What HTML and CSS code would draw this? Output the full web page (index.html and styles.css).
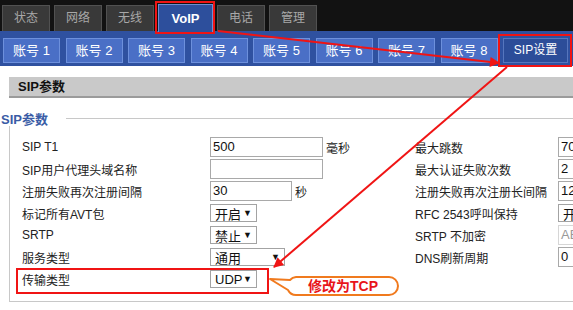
FILE: index.html
```html
<!DOCTYPE html>
<html lang="zh-CN">
<head>
    <meta charset="UTF-8">
    <meta name="viewport" content="width=device-width, initial-scale=1.0">
    <title>VoIP - SIP设置</title>
    <link rel="stylesheet" href="styles.css">
</head>
<body>
<div class="page">
    <div class="topbar">
        <div class="tab">状态</div>
        <div class="tab">网络</div>
        <div class="tab">无线</div>
        <div class="tab active">VoIP</div>
        <div class="tab">电话</div>
        <div class="tab">管理</div>
    </div>

    <div class="subbar">
        <div class="subtab">账号 1</div>
        <div class="subtab">账号 2</div>
        <div class="subtab">账号 3</div>
        <div class="subtab">账号 4</div>
        <div class="subtab">账号 5</div>
        <div class="subtab">账号 6</div>
        <div class="subtab">账号 7</div>
        <div class="subtab">账号 8</div>
        <div class="subtab active">SIP设置</div>
    </div>

    <div class="content">
        <div class="panel-head">SIP参数</div>

        <div class="legend-row">
            <span class="legend">SIP参数</span>
            <span class="legend-line"></span>
        </div>

        <div class="box">
            <div class="form-grid">
                <div class="label">SIP T1</div>
                <div class="field"><span class="input w113">500</span><span class="unit">毫秒</span></div>
                <div class="label">最大跳数</div>
                <div class="field"><span class="input w110">70</span></div>

                <div class="label">SIP用户代理头域名称</div>
                <div class="field"><span class="input w113"></span></div>
                <div class="label">最大认证失败次数</div>
                <div class="field"><span class="input w110">2</span></div>

                <div class="label">注册失败再次注册间隔</div>
                <div class="field"><span class="input w82">30</span><span class="unit">秒</span></div>
                <div class="label">注册失败再次注册长间隔</div>
                <div class="field"><span class="input w110">1200</span></div>

                <div class="label">标记所有AVT包</div>
                <div class="field"><span class="select">开启<i>▼</i></span></div>
                <div class="label">RFC 2543呼叫保持</div>
                <div class="field"><span class="select w110">开启<i>▼</i></span></div>

                <div class="label">SRTP</div>
                <div class="field"><span class="select">禁止<i>▼</i></span></div>
                <div class="label">SRTP 不加密</div>
                <div class="field"><span class="input w110 disabled">AES</span></div>

                <div class="label">服务类型</div>
                <div class="field"><span class="select w75">通用<i>▼</i></span></div>
                <div class="label">DNS刷新周期</div>
                <div class="field"><span class="input w110">0</span></div>

                <div class="label">传输类型</div>
                <div class="field"><span class="select">UDP<i>▼</i></span></div>
                <div class="label"></div>
                <div class="field"></div>
            </div>
        </div>
    </div>

    <!-- annotations drawn over the screenshot -->
    <svg class="marks" width="573" height="310" viewBox="0 0 573 310">
        <defs>
            <marker id="head" viewBox="0 0 10 10" refX="9" refY="5" markerWidth="6" markerHeight="5" orient="auto">
                <path d="M0 0 L10 5 L0 10 z" fill="#f01414"/>
            </marker>
        </defs>
        <rect x="156" y="2" width="58" height="31" fill="none" stroke="#f01414" stroke-width="2"/>
        <rect x="499" y="35" width="72" height="31" fill="none" stroke="#f01414" stroke-width="2"/>
        <rect x="17" y="269" width="251" height="24" fill="none" stroke="#f01414" stroke-width="2"/>
        <line x1="218" y1="31" x2="499" y2="63" stroke="#f01414" stroke-width="2" marker-end="url(#head)"/>
        <line x1="507" y1="67" x2="274" y2="267" stroke="#f01414" stroke-width="2" marker-end="url(#head)"/>
        <path d="M296 277 H389 A9 9 0 0 1 389 295 H296 A9 9 0 0 1 288 290 L270 279 L290 280 A9 9 0 0 1 296 277 Z"
              fill="#fff" stroke="#f07a1e" stroke-width="2" stroke-linejoin="round"/>
    </svg>
    <div class="callout">修改为TCP</div>
</div>
</body>
</html>
```

FILE: styles.css
```css
body {
    margin: 0;
    background: #fff;
    font-family: Tahoma, "Liberation Sans", "Noto Sans CJK SC", sans-serif;
    color: #222;
}
.page {
    position: relative;
    width: 573px;
    height: 310px;
    overflow: hidden;
}

/* main menu */
.topbar {
    display: flex;
    gap: 4px;
    height: 26px;
    padding: 5px 0 0 2px;
    background: #121212;
}
.tab {
    width: 46px;
    height: 25px;
    line-height: 25px;
    text-align: center;
    font-size: 12px;
    color: #a8a8a8;
    background: #393939;
    border: 1px solid #515151;
    border-bottom: none;
}
.tab.active {
    width: 53px;
    height: 27px;
    line-height: 27px;
    margin-top: -1px;
    font-size: 13px;
    font-weight: bold;
    color: #fff;
    background: #2d4f9c;
    border-color: #6d8ed2;
    position: relative;
    z-index: 1;
}

/* sub menu */
.subbar {
    display: flex;
    gap: 5.5px;
    height: 25px;
    padding: 7px 3px 3px;
    background: #2f51a0;
}
.subtab {
    width: 55px;
    height: 23px;
    line-height: 23px;
    text-align: center;
    font-size: 13px;
    color: #fff;
    background: #4a6fc6;
    border: 1px solid #6d90dc;
}
.subtab.active {
    width: 63px;
    font-size: 12px;
    background: #2c4d99;
    border-color: #5676bd;
}

/* content */
.panel-head {
    margin: 11px 0 0 9px;
    height: 19px;
    line-height: 19px;
    padding-left: 9px;
    font-size: 13px;
    font-weight: bold;
    color: #111;
    background: #c9c9c9;
    border-bottom: 2px solid #9b9b9b;
}
.legend-row {
    display: flex;
    align-items: center;
    height: 16px;
    margin-top: 12px;
}
.legend {
    padding-left: 1px;
    font-size: 13px;
    font-weight: bold;
    color: #3a5ca6;
}
.legend-line {
    flex: 1;
    margin-left: 18px;
    border-top: 1px solid #c8c8c8;
}
.box {
    margin-left: 9px;
    padding: 10px 0 11px 12px;
    border-left: 1px solid #c8c8c8;
    border-bottom: 1px solid #c8c8c8;
}
.form-grid {
    display: grid;
    grid-template-columns: 188px 205px 143px 1fr;
    grid-auto-rows: 22px;
    align-items: center;
}
.label {
    font-size: 12px;
    color: #222;
    white-space: nowrap;
}
.field {
    display: flex;
    align-items: center;
    gap: 3px;
    white-space: nowrap;
}
.input {
    box-sizing: border-box;
    height: 20px;
    line-height: 18px;
    padding-left: 2px;
    font-size: 13px;
    color: #111;
    background: #fff;
    border: 1px solid #a9a9a9;
}
.input.disabled {
    color: #999;
    border-color: #d6d6d6;
}
.w113 { width: 113px; }
.w110 { width: 110px; }
.w82 { width: 82px; }
.w75 { width: 75px; }
.unit {
    font-size: 12px;
}
.select {
    box-sizing: border-box;
    display: flex;
    justify-content: space-between;
    align-items: center;
    width: 47px;
    height: 18px;
    padding: 0 4px 0 4px;
    font-size: 13px;
    color: #111;
    background: #fff;
    border: 1px solid #a3a3a3;
}
.select.w75 { width: 75px; }
.select.w110 { width: 110px; }
.select i {
    font-style: normal;
    font-size: 9px;
}

/* annotation overlay */
.marks {
    position: absolute;
    left: 0;
    top: 0;
    z-index: 5;
}
.callout {
    position: absolute;
    left: 288px;
    top: 277px;
    width: 110px;
    height: 18px;
    line-height: 18px;
    text-align: center;
    font-size: 14px;
    font-weight: bold;
    color: #e8141a;
    z-index: 6;
}
```
